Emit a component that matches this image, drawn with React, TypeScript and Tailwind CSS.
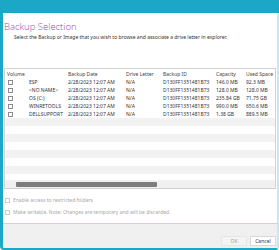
import React from 'react';

const rows = [
  { name: 'ESP', cap: '146.0 MB', used: '92.3 MB' },
  { name: '<NO NAME>', cap: '128.0 MB', used: '128.0 MB' },
  { name: 'OS (C:)', cap: '235.84 GB', used: '71.75 GB' },
  { name: 'WINRETOOLS', cap: '990.0 MB', used: '650.6 MB' },
  { name: 'DELLSUPPORT', cap: '1.38 GB', used: '889.5 MB' },
];

const Box = ({ faded }: { faded?: boolean }) => (
  <span
    className={`inline-block w-[5px] h-[5px] border bg-white shrink-0 ${
      faded ? 'border-[#cccccc]' : 'border-[#8c8c8c]'
    }`}
  />
);

const App = () => {
  return (
    <div className="w-[279px] h-[250px] flex flex-col bg-white overflow-hidden text-[#333] font-['Noto_Sans',sans-serif]">
      {/* title bar */}
      <div className="h-[13px] bg-[#1ba8c6] shrink-0" />

      <div className="flex-1 flex flex-col border-l-[3px] border-b-[2px] border-r-[2px] border-l-[#1ba8c6] border-b-[#1ba8c6] border-r-[#c6e8f0] rounded-bl-[4px] rounded-br-[3px] min-h-0">
        {/* heading */}
        <div className="pl-[1px] pt-[8px] text-[9.5px] leading-[12px] font-light text-[#a3449d] font-['Open_Sans',sans-serif]">
          Backup Selection
        </div>
        <div className="pl-[11px] mt-[1px] text-[5px] leading-[7px] text-[#333] whitespace-nowrap">
          Select the Backup or Image that you wish to browse and associate a drive letter in explorer.
        </div>

        {/* table */}
        <div className="mt-[27px] ml-[1px] mr-[1px] h-[121px] shrink-0 border border-[#d2d2d2] flex flex-col overflow-hidden">
          <div className="h-[9px] shrink-0 pt-[2px] flex items-center text-[5px] leading-[7px] text-[#444] whitespace-nowrap">
            <div className="w-[63px] pl-[2px]">Volume</div>
            <div className="w-[58px]">Backup Date</div>
            <div className="w-[37px]">Drive Letter</div>
            <div className="w-[53px]">Backup ID</div>
            <div className="w-[30px]">Capacity</div>
            <div className="flex-1 overflow-hidden">Used Space</div>
          </div>
          <div className="flex-1 flex flex-col overflow-hidden">
            {rows.map((r, i) => (
              <div
                key={i}
                className="h-[8px] shrink-0 flex items-center text-[5px] leading-[8px] text-[#333] whitespace-nowrap"
              >
                <div className="w-[63px] pl-[3px] flex items-center">
                  <Box />
                  <span className="ml-[16px] w-[39px] overflow-hidden">{r.name}</span>
                </div>
                <div className="w-[58px]">2/28/2023 12:07 AM</div>
                <div className="w-[37px]">N/A</div>
                <div className="w-[53px]">D130FF1351481B73</div>
                <div className="w-[30px]">{r.cap}</div>
                <div className="flex-1 overflow-hidden">{r.used}</div>
              </div>
            ))}
            {Array.from({ length: 8 }).map((_, i) => (
              <div
                key={i}
                className={`h-[8px] shrink-0 ${i % 2 === 0 ? 'bg-[#f2f2f2]' : 'bg-white'}`}
              />
            ))}
          </div>
          {/* horizontal scrollbar */}
          <div className="h-[8px] shrink-0 bg-[#f0f0f0] flex items-center pl-[11px] pr-[118px]">
            <div className="h-[5px] w-full bg-[#7d7d7d] rounded-[1px]" />
          </div>
        </div>

        {/* options */}
        <div className="pl-[2px] pt-[9px] flex flex-col gap-[7px] text-[5px] leading-[5px] text-[#a8a8a8] whitespace-nowrap">
          <div className="flex items-center gap-[3px]">
            <Box faded />
            <span>Enable access to restricted folders</span>
          </div>
          <div className="flex items-center gap-[3px]">
            <Box faded />
            <span>Make writable. Note: Changes are temporary and will be discarded.</span>
          </div>
        </div>

        {/* footer */}
        <div className="mt-auto h-[25px] shrink-0 border-t border-[#d6cdd8] bg-[#f0f0f0] flex items-end justify-end gap-[3px] pr-[1px] pb-[2px] rounded-bl-[3px]">
          <button className="w-[26px] h-[10px] text-[5px] leading-[5px] text-[#a0a0a0] bg-[#f4f4f4] border border-[#e6e6e6]">
            OK
          </button>
          <button className="w-[26px] h-[10px] text-[5px] leading-[5px] text-[#333] bg-white border border-[#d8d8d8]">
            Cancel
          </button>
        </div>
      </div>
    </div>
  );
};

export default App;
